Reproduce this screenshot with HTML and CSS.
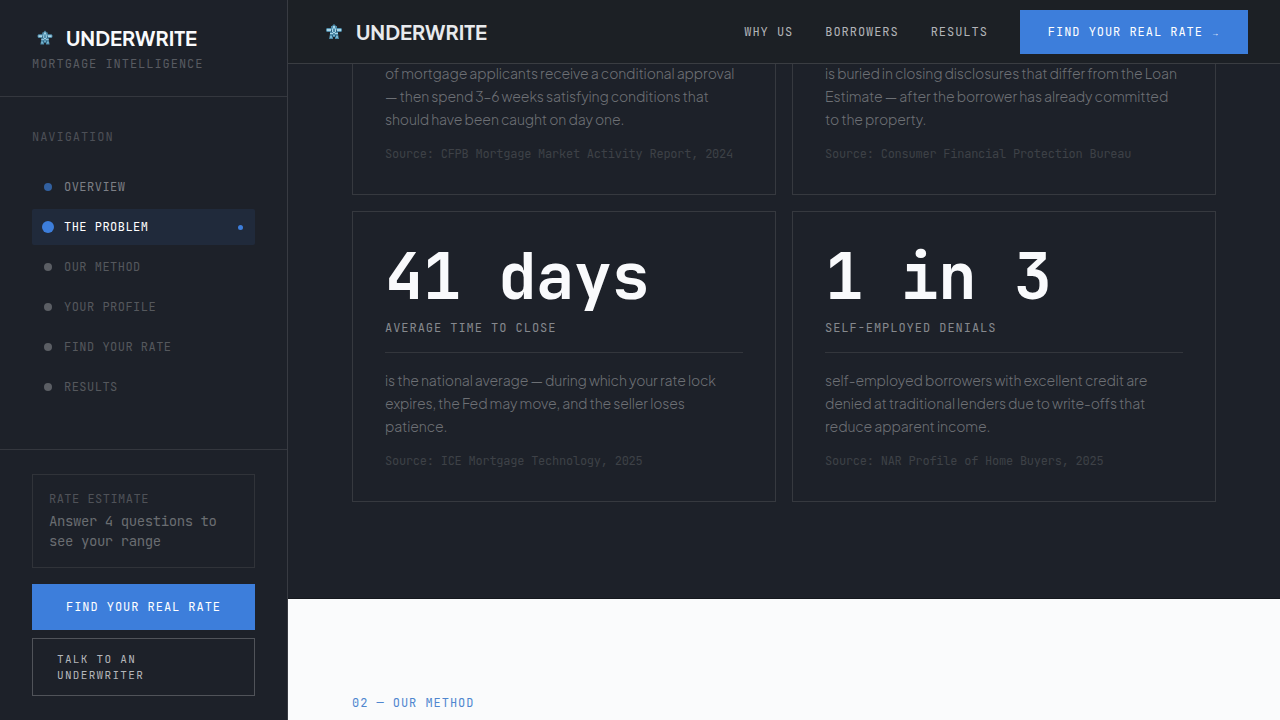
FILE: index.html
```html
<!DOCTYPE html>
<html lang="en">

<head>
    <meta charset="UTF-8">
    <meta name="viewport" content="width=device-width, initial-scale=1.0">
    <title>Underwrite - Mortgage Intelligence</title>
    <link rel="stylesheet" href="styles.css">
</head>

<body>
    <!-- logo mark, used in the sidebar and the top bar -->
    <svg class="defs" aria-hidden="true">
        <symbol id="mark" viewBox="0 0 28 28">
            <path fill="#4d8aa8" d="M14 6l2 2h1v2h4l1 1v2l-1 1h-3v2l1 5h-4v-2h-2v2H9l1-5v-2H7l-1-1v-2l1-1h4V8h1z" />
            <path fill="#a9d4e6" d="M13 8h2v2h-2zM7 11h4v2H7zM17 11h4v2h-4zM12 11h1v3h-1zM15 11h1v3h-1zM10 15h3v1h-3zM15 15h3v1h-3zM13 14h2v1h-2z" />
            <path fill="#2b5d7b" d="M11 12h1v2h-1zM16 12h1v2h-1zM12 17h1v2h-1zM15 17h1v2h-1z" />
            <path fill="#7ab6d0" d="M10 18h2v2h-2zM16 18h2v2h-2zM13 17h2v1h-2zM12 10h4v1h-4z" />
        </symbol>
    </svg>

    <div class="layout">
        <aside class="sidebar">
            <div class="sidebar-head">
                <a class="logo" href="#">
                    <svg width="26" height="26"><use href="#mark" /></svg>
                    <span>UNDERWRITE</span>
                </a>
                <div class="tagline">MORTGAGE INTELLIGENCE</div>
            </div>

            <nav class="sidebar-nav">
                <div class="nav-title">NAVIGATION</div>
                <ul>
                    <li><a class="nav-item visited" href="#overview">OVERVIEW</a></li>
                    <li><a class="nav-item active" href="#problem">THE PROBLEM</a></li>
                    <li><a class="nav-item" href="#method">OUR METHOD</a></li>
                    <li><a class="nav-item" href="#profile">YOUR PROFILE</a></li>
                    <li><a class="nav-item" href="#rate">FIND YOUR RATE</a></li>
                    <li><a class="nav-item" href="#results">RESULTS</a></li>
                </ul>
            </nav>

            <div class="sidebar-foot">
                <div class="estimate">
                    <div class="estimate-title">RATE ESTIMATE</div>
                    <div class="estimate-text">Answer 4 questions to see your range</div>
                </div>
                <button class="btn" type="button">FIND YOUR REAL RATE</button>
                <button class="btn-outline" type="button">TALK TO AN UNDERWRITER</button>
            </div>
        </aside>

        <div class="main">
            <header class="topbar">
                <a class="logo" href="#">
                    <svg width="28" height="28"><use href="#mark" /></svg>
                    <span>UNDERWRITE</span>
                </a>
                <nav class="topnav">
                    <a href="#why">WHY US</a>
                    <a href="#borrowers">BORROWERS</a>
                    <a href="#results">RESULTS</a>
                    <button class="btn" type="button">FIND YOUR REAL RATE <span class="arrow">→</span></button>
                </nav>
            </header>

            <section class="problem" id="problem">
                <div class="stats">
                    <article class="card card-top">
                        <p>of mortgage applicants receive a conditional approval — then spend 3–6 weeks satisfying conditions that should have been caught on day one.</p>
                        <div class="source">Source: CFPB Mortgage Market Activity Report, 2024</div>
                    </article>
                    <article class="card card-top">
                        <p>is buried in closing disclosures that differ from the Loan Estimate — after the borrower has already committed to the property.</p>
                        <div class="source">Source: Consumer Financial Protection Bureau</div>
                    </article>
                    <article class="card">
                        <div class="number">41 days</div>
                        <h3>AVERAGE TIME TO CLOSE</h3>
                        <p>is the national average — during which your rate lock expires, the Fed may move, and the seller loses patience.</p>
                        <div class="source">Source: ICE Mortgage Technology, 2025</div>
                    </article>
                    <article class="card">
                        <div class="number">1 in 3</div>
                        <h3>SELF-EMPLOYED DENIALS</h3>
                        <p>self-employed borrowers with excellent credit are denied at traditional lenders due to write-offs that reduce apparent income.</p>
                        <div class="source">Source: NAR Profile of Home Buyers, 2025</div>
                    </article>
                </div>
            </section>

            <section class="method" id="method">
                <h2>02 — OUR METHOD</h2>
            </section>
        </div>
    </div>
</body>

</html>
```
FILE: styles.css
```css
* {
    box-sizing: border-box;
}

body {
    margin: 0;
    background-color: #1d2129;
    color: #f9fafc;
    font-family: "JetBrains Mono", "DejaVu Sans Mono", monospace;
    font-size: 12px;
    line-height: 16px;
}

a {
    color: inherit;
    text-decoration: none;
}

h2,
h3,
p,
ul {
    margin: 0;
    padding: 0;
    font-weight: normal;
}

ul {
    list-style: none;
}

button {
    font: inherit;
    cursor: pointer;
}

.defs {
    display: none;
}

.layout {
    display: flex;
    min-height: 100vh;
}

/* sidebar */

.sidebar {
    display: flex;
    flex-direction: column;
    flex: 0 0 288px;
    border-right: 1px solid #383b42;
}

.sidebar-head {
    padding: 24px 32px;
    border-bottom: 1px solid #34373e;
}

.logo {
    display: flex;
    align-items: center;
    gap: 8px;
    font-family: "Plus Jakarta Sans", Inter, sans-serif;
    font-size: 20px;
    font-weight: 700;
    line-height: 28px;
}

.tagline {
    margin-top: 4px;
    color: #585b61;
    letter-spacing: 0.08em;
}

.nav-title {
    margin-bottom: 24px;
    color: #4c4f56;
    letter-spacing: 0.08em;
}

.sidebar-nav {
    flex: 1;
    padding: 32px;
}

.sidebar-nav ul {
    display: flex;
    flex-direction: column;
    gap: 4px;
}

.nav-item {
    display: flex;
    align-items: center;
    gap: 12px;
    height: 36px;
    padding: 0 12px;
    color: #55585d;
    letter-spacing: 0.04em;
}

.nav-item::before {
    content: "";
    width: 8px;
    height: 8px;
    border-radius: 50%;
    background-color: #5b5e64;
}

.nav-item.visited {
    color: #7c7f85;
}

.nav-item.visited::before {
    background-color: #32609f;
}

.nav-item.active {
    background-color: #202a3b;
    border-radius: 2px;
    color: #fff;
}

.nav-item.active::before {
    background-color: #3d7edb;
    box-shadow: 0 0 0 2px #3d7edb;
}

.nav-item.active::after {
    content: "";
    width: 5px;
    height: 5px;
    margin-left: auto;
    border-radius: 50%;
    background-color: #3d7edb;
}

.sidebar-foot {
    display: flex;
    flex-direction: column;
    padding: 24px 32px;
    border-top: 1px solid #34373e;
}

.estimate {
    margin-bottom: 16px;
    padding: 16px;
    border: 1px solid #303339;
}

.estimate-title {
    margin-bottom: 4px;
    color: #4f5258;
    letter-spacing: 0.04em;
}

.estimate-text {
    color: #6a6d71;
    font-size: 14px;
    line-height: 20px;
    letter-spacing: -0.03em;
}

.btn {
    padding: 14px 28px;
    border: none;
    background-color: #3d7edb;
    color: #fff;
    letter-spacing: 0.08em;
}

.sidebar .btn {
    padding: 15px 28px;
}

.btn-outline {
    margin-top: 8px;
    padding: 12px 24px;
    border: 1px solid #505359;
    background: none;
    color: #b4b6ba;
    font-size: 11px;
    text-align: left;
    letter-spacing: 0.12em;
}

/* top bar */

.main {
    display: flex;
    flex-direction: column;
    flex: 1;
    min-width: 0;
}

.topbar {
    position: sticky;
    top: 0;
    z-index: 1;
    display: flex;
    align-items: center;
    justify-content: space-between;
    height: 64px;
    padding: 0 32px;
    border-bottom: 1px solid #3a3d42;
    background-color: #1c2025;
}

.topbar .logo {
    color: #e8eaed;
}

.topnav {
    display: flex;
    align-items: center;
    gap: 32px;
    color: #b2b4b8;
    letter-spacing: 0.08em;
}

.arrow {
    font-family: "Liberation Sans", sans-serif;
    font-size: 8px;
    line-height: 12px;
}

/* problem */

.problem {
    padding: 0 64px 96px;
    border-bottom: 1px solid #15181d;
}

.stats {
    display: grid;
    grid-template-columns: 1fr 1fr;
    gap: 16px;
    margin-top: -2px;
}

.card {
    padding: 32px;
    border: 1px solid #36393f;
}

/* these continue up behind the top bar */
.card-top {
    padding-top: 0;
    border-top: none;
}

.number {
    margin-bottom: 12px;
    font-size: 64px;
    font-weight: bold;
    line-height: 64px;
    letter-spacing: -0.01em;
}

.card h3 {
    margin-bottom: 16px;
    padding-bottom: 16px;
    border-bottom: 1px solid #33363c;
    color: #86898e;
    font-size: 12px;
    letter-spacing: 0.08em;
}

.card p {
    color: #6d7075;
    font-family: "Plus Jakarta Sans", Inter, sans-serif;
    font-size: 14px;
    font-weight: 300;
    line-height: 23px;
    letter-spacing: -0.01em;
}

.source {
    margin-top: 16px;
    color: #3e4147;
    line-height: 15px;
    letter-spacing: -0.02em;
}

/* method */

.method {
    flex: 1;
    padding: 96px 64px 0;
    background-color: #fafbfc;
}

.method h2 {
    color: #4f86cf;
    font-size: 12px;
    letter-spacing: 0.08em;
}
```
